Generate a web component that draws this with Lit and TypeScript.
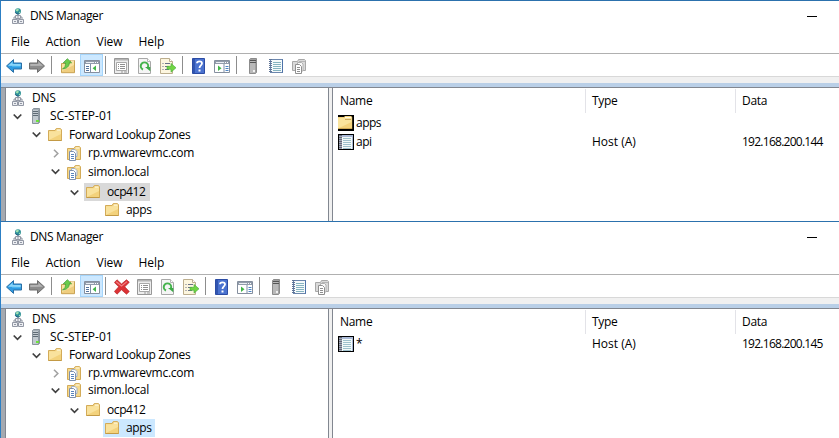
import { LitElement, html, css, svg, nothing, SVGTemplateResult } from "lit";
import { customElement, property } from "lit/decorators.js";
import { classMap } from "lit/directives/class-map.js";
import { styleMap } from "lit/directives/style-map.js";

interface TreeNode {
  label: string;
  icon: string;
  level: number;
  height: number;
  spacing: number;
  arrow?: "open" | "closed";
  gap?: number;
  selected?: "muted" | "active";
}

interface DnsRecord {
  name: string;
  icon: string;
  type?: string;
  data?: string;
}

const folder = svg`
  <path d="M1.5 3.5H8l1.2-1.9h4.3l1 1.2V13.5h-13z" fill="#f3d27c" stroke="#d3ab58"/>
  <path d="M2 4.2H9l1-1.2h4V7L2 13z" fill="#fbe7a8" opacity=".75"/>
  <path d="M9.8 3h3.6" stroke="#fffbe8"/><path d="M1.5 13.5h13" stroke="#c39a45"/>`;

const book = svg`
  <rect x="2.5" y="1.5" width="12" height="13" fill="#f5fafb" stroke="#6b86ad"/>
  <path d="M5 4.5h8M5 6.5h8M5 8.5h8M5 10.5h8M5 12.5h8" stroke="#86b4c0"/>
  <path d="M2.5 1v14" stroke="#5f7496" stroke-width="3" stroke-dasharray="1 1"/>
  <path d="M14.5 1.5v13" stroke="#4d72a8"/>`;

const icons: Record<string, SVGTemplateResult> = {
  dns: svg`
    <path d="M8 6v3M4 11V9h8v2" fill="none" stroke="#8d94a0"/>
    <circle cx="8" cy="3.2" r="3" fill="#2e8f98"/><path d="M6 1.5l2-.9 1 1.4-1.600 1.500-1.400-.4zM9 4l1.600-.5-.8 2-1 .3z" fill="#9fe0b0"/>
    <path d="M5.200 4.200C6 6 8 6.400 9.600 5.600" stroke="#245c86" fill="none"/>
    <path d="M5.500 7.500h5v3h-5zM2.500 11.500h5v4h-5zM8.500 11.500h5v4h-5z" fill="#eceef2" stroke="#9398a5"/>
    <path d="M7 9h2M4 13.500h2M10 13.500h2" stroke="#9398a5"/>`,
  server: svg`
    <path d="M4.500 1.500l1-1h6v14l-1 1h-6z" fill="#a3adb5" stroke="#8a949d"/>
    <path d="M5 2h5v13H5z" fill="#c2cad0"/><path d="M5 3.500h5M5 5.500h5M5 7.500h5" stroke="#5f6b75"/>
    <path d="M10.500 2v13" stroke="#8e99a3"/><path d="M8 12h3v2H8z" fill="#6ce23c"/>`,
  serverGray: svg`
    <path d="M4.500 1.500l1-1h6v14l-1 1h-6z" fill="#a0a0a0" stroke="#8c8c8c"/>
    <path d="M5 2h5v13H5z" fill="#b9b9b9"/><path d="M5 2.500h6M5 4.500h6" stroke="#555"/>
    <path d="M8 12h2v2H8z" fill="#f0f0f0"/>`,
  folder,
  zone: svg`
    <path d="M1.500 3.500H8l1.200-1.900h4.300l1 1.200V14.500h-13z" fill="#f5d98d" stroke="#d3ab58"/>
    <path d="M9.800 3h3.600" stroke="#fffbe8"/>
    <path d="M5.500 4.500H9l2 2v5H5.500z" fill="#f8fbff" stroke="#a3b0c4"/>
    <path d="M3.500 6.500H7.500l2 2v7h-6z" fill="#fff" stroke="#7e90ad"/>
    <path d="M5 9.500h3M5 11.500h3M5 13.500h3" stroke="#5985bd"/>`,
  folderBoxed: svg`<path d="M0 0h16v16H0z" fill="#000"/><path d="M0 2h6l1-1h6l1.200 1V14H0z" fill="#f3d27c"/>
    <path d="M0 3h8l1-1h4.500v5L0 13.500z" fill="#fae49d"/><path d="M7 2.500h6" stroke="#fffbe8"/><path d="M7 4.500h6" stroke="#cba75b"/>
    <path d="M0 13.500h14" stroke="#cfa955"/>`,
  bookBoxed: svg`<path d="M0 0h16v16H0z" fill="#000"/><path d="M1 1h14v14H1z" fill="#a9b9d7"/>
    <path d="M4 3h10v12H4z" fill="#f3faf9"/><path d="M5 4.500h8M5 6.500h8M5 8.500h8M5 10.500h8M5 12.500h8M5 14.500h8" stroke="#9fc1cc"/>
    <path d="M1 1h3v14H1z" fill="#a4a8b3"/><path d="M2.500 1v14" stroke="#62687a" stroke-width="3" stroke-dasharray="1 1"/>`,
  back: svg`<path d="M.5 8L7.500 1.600v3.400h8v6h-8v3.400z" fill="#2f9be2" stroke="#2a6fa5" stroke-linejoin="round"/>
    <path d="M2 7.800L6.600 3.700V6h8.100v2z" fill="#8bd6fa"/><path d="M6 8.500h8.500" stroke="#45b2ee"/>`,
  forward: svg`<path d="M15.500 8L8.500 1.600v3.400h-8v6h8v3.400z" fill="#8c8c8c" stroke="#6e6e6e" stroke-linejoin="round"/>
    <path d="M14 7.800L9.400 3.700V6H1.300v2z" fill="#b4b4b4"/>`,
  up: svg`<path d="M1.500 5.500H9l1.500-3h4v12.200h-13z" fill="#efcd7e" stroke="#c9a252"/>
    <path d="M2 6h8l1-2h3v3L2 13z" fill="#f9e2a0"/><path d="M11 3h3" stroke="#fff8dc"/>
    <path d="M2.500 10.800C5 9.800 5.800 7.500 5.400 4.800H3.200L7.400.7l4.200 4.100H9.300C9.400 8.400 6.400 11 2.500 10.800z" fill="#6acb4b" stroke="#3f9b36" stroke-width=".7"/>`,
  tree: svg`<path d="M.5 2.500h15v12H.5z" fill="#fff" stroke="#858f9e"/>
    <path d="M1 3h14v3H1z" fill="#929cab"/><path d="M2 4.500h8" stroke="#e9edf3"/><path d="M11 4.500h1M13 4.500h1" stroke="#fff"/>
    <path d="M6.500 6v8" stroke="#8090a8"/><path d="M2 8.500h3M2 10.500h3M2 12.500h3" stroke="#55749e"/>
    <path d="M12 7.500v5.500L8.600 10.200z" fill="#42b649"/>`,
  action: svg`<path d="M.5 2.500h15v12H.5z" fill="#fff" stroke="#858f9e"/>
    <path d="M1 3h14v3H1z" fill="#929cab"/><path d="M2 4.500h8" stroke="#e9edf3"/><path d="M11 4.500h1M13 4.500h1" stroke="#fff"/>
    <path d="M10 6v8" stroke="#8090a8"/><path d="M11.500 8.500h3M11.500 10.500h3M11.500 12.500h3" stroke="#4c84c4"/>
    <path d="M4 7.500v5.500l3.500-2.800z" fill="#42b649"/>`,
  remove: svg`<path d="M3 .8L7.500 5 12.500.8l2.800 2.500-4.600 4.500 4.600 4.700-2.800 2.700L7.500 10.800 3 15.200.4 12.500 4.700 7.800.4 3.500z" fill="#dc3235" stroke="#b4282b" stroke-width=".7"/>
    <path d="M2.200 2.800L7.500 7l5.500-4.400" stroke="#f28083" stroke-width="1.200" fill="none"/>`,
  properties: svg`<path d="M.5.500h14v15H.5z" fill="#ececec" stroke="#979797"/><path d="M1 1h13v1.500H1z" fill="#b4b4b4"/>
    <path d="M2.500 4.500h10v8h-10z" fill="#fff" stroke="#a8a8a8"/><path d="M4 6.500h1M6 6.500h5M4 8.500h1M6 8.500h5M4 10.500h1M6 10.500h5" stroke="#8f8f8f"/>
    <path d="M7 14h2M10 14h3" stroke="#999"/>`,
  refresh: svg`<path d="M1.500.5h9l3 3v12h-12z" fill="#f5f5f5" stroke="#a8a8a8"/><path d="M10.500.5v3h3" fill="#fff" stroke="#b5b5b5"/>
    <path d="M6 11.500A3.700 3.700 0 1 1 10.900 9.500" stroke="#45b34c" stroke-width="2" fill="none"/>
    <path d="M8 9h5.300v4.200z" fill="#3aaa45"/>`,
  exportList: svg`<path d="M.5.500h9l3 3v12H.5z" fill="#fdf6df" stroke="#bcae8e"/><path d="M9.500.5v3h3" fill="#fff" stroke="#bcae8e"/>
    <path d="M2.500 5.500h1M2.500 8.500h1M2.500 11.500h1M5 5.500h5M5 8.500h4M5 11.500h4" stroke="#687188"/>
    <path d="M7 8.300h4V5.400l5 4.400-5 4.400v-2.900H7z" fill="#72d544" stroke="#45ac3a" stroke-width=".6"/>`,
  help: svg`<path d="M1.500.5h12v15h-12z" fill="#4a72cf" stroke="#2c4ca4"/><path d="M2 1h2v14H2z" fill="#3155b0"/>
    <path d="M6 5.200C6 2.700 11 2.600 11 5.300 11 7.400 8.500 7.300 8.500 10" stroke="#fff" stroke-width="1.800" fill="none"/><path d="M7.500 11.500h2v2h-2z" fill="#fff"/>`,
  book,
  copy: svg`<path d="M1.500 3.500h5l1-2h6l1 1v10h-13z" fill="#dadada" stroke="#a8a8a8"/><path d="M8 3.500h6" stroke="#b5b5b5"/>
    <path d="M6.500 4.500h4l1.500 1.500v7H6.500z" fill="#f9f9f9" stroke="#b0b0b0"/>
    <path d="M4.500 6.500h4l2 2v7h-6z" fill="#fff" stroke="#909090"/><path d="M6 9.500h3M6 11.500h3M6 13.500h3" stroke="#8f8f8f"/>`,
};

const icon = (name: string) => html`<svg class="icon" viewBox="0 0 16 16" width="16" height="16">${icons[name]}</svg>`;

@customElement("dns-tree")
export class DnsTree extends LitElement {
  @property({ attribute: false }) nodes: TreeNode[] = [];

  static styles = css`
    :host { display: block; width: 322px; flex: none; border-right: 1px solid #828790; border-left: 1px solid #828790; background: #fff; overflow: hidden; }
    .row { display: flex; align-items: center; }
    .arrow { width: 9px; height: 9px; flex: none; margin-right: 5px; fill: none; }
    .open { stroke: #404040; stroke-width: 1.7; }
    .closed { stroke: #a2a2a2; stroke-width: 1.6; }
    .item { display: flex; align-items: center; align-self: stretch; padding: 0 4px 0 1px; white-space: nowrap; }
    .icon { flex: none; margin-right: 6px; }
    .muted { background: #d9d9d9; }
    .active { background: #cce8ff; }
  `;

  render() {
    return this.nodes.map((n) => html`
      <div class="row" style=${styleMap({
        height: `${n.height}px`,
        marginTop: `${n.gap ?? 0}px`,
        paddingLeft: `${n.level ? n.level * 19 - 12 : 3}px`,
        letterSpacing: `${n.spacing}px`,
      })}>
        ${n.level ? html`<svg class="arrow ${n.arrow ?? ""}" viewBox="0 0 9 9">
          ${n.arrow === "open" ? svg`<path d="M.7 2.500L4.500 6.300 8.300 2.500"/>` : n.arrow === "closed" ? svg`<path d="M3 .7L6.800 4.500 3 8.300"/>` : nothing}
        </svg>` : nothing}
        <div class=${classMap({ item: true, muted: n.selected === "muted", active: n.selected === "active" })}>
          ${icon(n.icon)}<span>${n.label}</span>
        </div>
      </div>`);
  }
}

@customElement("dns-records")
export class DnsRecords extends LitElement {
  @property({ attribute: false }) records: DnsRecord[] = [];

  static styles = css`
    :host { display: block; flex: 1; min-width: 0; border-left: 1px solid #828790; background: #fff; }
    .row { display: grid; grid-template-columns: 253px 150px 1fr; height: 19px; align-items: center; white-space: nowrap; }
    .head { height: 24px; padding-top: 1px; letter-spacing: -0.3px; }
    .head > span { box-sizing: border-box; height: 24px; line-height: 24px; padding-left: 6px; border-right: 1px solid #e3e3e8; }
    .head > span:first-child { padding-left: 7px; }
    .head > span:last-child { border-right: none; }
    .name { display: flex; align-items: center; gap: 2px; padding-left: 5px; letter-spacing: -0.5px; }
    .icon { flex: none; }
    .type { padding-left: 6px; }
    .data { padding-left: 6px; letter-spacing: -0.74px; }
  `;

  render() {
    return html`
      <div class="row head"><span>Name</span><span>Type</span><span>Data</span></div>
      ${this.records.map((r) => html`
        <div class="row">
          <span class="name">${icon(r.icon)}<span>${r.name}</span></span>
          <span class="type">${r.type ?? ""}</span>
          <span class="data">${r.data ?? ""}</span>
        </div>`)}
    `;
  }
}

@customElement("dns-window")
export class DnsWindow extends LitElement {
  @property({ attribute: false }) nodes: TreeNode[] = [];
  @property({ attribute: false }) records: DnsRecord[] = [];
  @property({ attribute: false }) tools: string[][] = [];

  static styles = css`
    :host { display: flex; flex-direction: column; box-sizing: border-box; height: 221px; border-top: 1px solid #2c71ad; border-left: 1px solid #2c7fc4; background: #fff; overflow: hidden; }
    .title { display: flex; align-items: center; height: 30px; padding: 0 22px 0 9px; flex: none; }
    .caption { margin-left: 4px; flex: 1; letter-spacing: -0.37px; }
    .minimize { width: 10px; height: 1px; background: #000; }
    .menu { display: flex; height: 22px; line-height: 22px; padding-left: 10px; flex: none; border-bottom: 1px solid #b0b0b0; letter-spacing: -0.1px; }
    .menu > span { margin-right: 16.2px; }
    .toolbar { display: flex; align-items: center; height: 22px; padding-left: 2px; flex: none; border-bottom: 1px solid #d8d8d8; }
    .tool { display: flex; box-sizing: border-box; align-items: center; justify-content: center; width: 23px; height: 22px; padding: 2px 1px 0 0; }
    .pressed { background: #cce8ff; box-shadow: inset 0 0 0 1px #a5d5fb; padding-right: 0; }
    .separator { width: 1px; height: 18px; margin: 0 5px 0 2px; background: #8d8d8d; }
    .gutter { height: 6px; flex: none; background: #f0f0f0; }
    .band { height: 4px; flex: none; background: #b9cfe7; border-bottom: 1px solid #828790; }
    .body { display: flex; flex: 1; min-height: 0; gap: 3px; padding-left: 4px; background: linear-gradient(90deg, #a5a9b0 4px, #f0f0f0 4px); }
  `;

  render() {
    return html`
      <div class="title">${icon("dns")}<span class="caption">DNS Manager</span><span class="minimize"></span></div>
      <div class="menu"><span>File</span><span>Action</span><span>View</span><span>Help</span></div>
      <div class="toolbar">
        ${this.tools.map((group, i) => html`
          ${i ? html`<span class="separator"></span>` : nothing}
          ${group.map((t) => html`<span class=${classMap({ tool: true, pressed: t === "tree" })}>${icon(t)}</span>`)}`)}
      </div>
      <div class="gutter"></div>
      <div class="band"></div>
      <div class="body">
        <dns-tree .nodes=${this.nodes}></dns-tree>
        <dns-records .records=${this.records}></dns-records>
      </div>
    `;
  }
}

const tools = (edit: string[]) => [
  ["back", "forward"], ["up", "tree"], [...edit, "properties", "refresh", "exportList"], ["help", "action"], ["serverGray", "book", "copy"],
];

const upperTree: TreeNode[] = [
  { label: "DNS", icon: "dns", level: 0, height: 19, spacing: -0.2 },
  { label: "SC-STEP-01", icon: "server", level: 1, height: 18, spacing: 0, arrow: "open" },
  { label: "Forward Lookup Zones", icon: "folder", level: 2, height: 19, spacing: -0.35, arrow: "open" },
  { label: "rp.vmwarevmc.com", icon: "zone", level: 3, height: 18, spacing: -0.25, arrow: "closed" },
  { label: "simon.local", icon: "zone", level: 3, height: 19, spacing: -0.2, arrow: "open" },
  { label: "ocp412", icon: "folder", level: 4, height: 18, spacing: -0.4, arrow: "open", gap: 2, selected: "muted" },
  { label: "apps", icon: "folder", level: 5, height: 18, spacing: -0.4 },
];

const lowerTree: TreeNode[] = [
  { ...upperTree[0] },
  { ...upperTree[1] },
  { ...upperTree[2], height: 18 },
  { ...upperTree[3] },
  { ...upperTree[4], height: 16 },
  { ...upperTree[5], gap: 3, selected: undefined },
  { ...upperTree[6], selected: "active" },
];

@customElement("app-root")
export class AppRoot extends LitElement {
  static styles = css`
    :host { display: block; width: 839px; height: 438px; overflow: hidden; background: #fff; color: #000; font: 12px/18px "Open Sans", "Noto Sans", sans-serif; }
  `;

  render() {
    return html`
      <dns-window .nodes=${upperTree} .tools=${tools([])}
        .records=${[
          { name: "apps", icon: "folderBoxed" },
          { name: "api", icon: "bookBoxed", type: "Host (A)", data: "192.168.200.144" },
        ]}></dns-window>
      <dns-window .nodes=${lowerTree} .tools=${tools(["remove"])}
        .records=${[{ name: "*", icon: "bookBoxed", type: "Host (A)", data: "192.168.200.145" }]}></dns-window>
    `;
  }
}
